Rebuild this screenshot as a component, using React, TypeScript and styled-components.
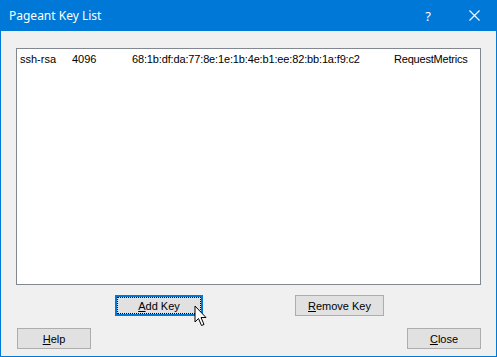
import styled, { createGlobalStyle } from "styled-components";

const Global = createGlobalStyle`
  html, body {
    margin: 0;
    padding: 0;
    width: 497px;
    height: 357px;
    overflow: hidden;
    background: #f0f0f0;
  }
`;

type BtnProps = {
  $focused?: boolean;
  $width: string;
};

const Window = styled.div`
  position: relative;
  width: 497px;
  height: 357px;
  box-sizing: border-box;
  border: 1px solid #0078d7;
  border-top: none;
  background: #f0f0f0;
  display: flex;
  flex-direction: column;
  font-family: "Liberation Sans", Arial, sans-serif;
  font-size: 11px;
  color: #000;
`;

const TitleBar = styled.div`
  height: 31px;
  margin: 0 -1px;
  background: #0078d7;
  color: #fff;
  display: flex;
  align-items: center;
  font-family: "Noto Sans", "Open Sans", sans-serif;
  font-size: 12px;
  padding-left: 9px;
  .title {
    flex: 1;
    margin-top: -1px;
  }
`;

const TitleButton = styled.div`
  width: 46px;
  height: 31px;
  display: flex;
  align-items: center;
  justify-content: center;
  font-family: "Noto Sans", sans-serif;
  font-size: 13px;
  color: #fff;
`;

const Content = styled.div`
  flex: 1;
  display: flex;
  flex-direction: column;
  padding: 17px 15px 0 15px;
`;

const KeyList = styled.div`
  height: 237px;
  box-sizing: border-box;
  border: 1px solid #828790;
  background: #fff;
  padding: 3px 2px;
`;

const KeyRow = styled.div`
  display: flex;
  height: 14px;
  line-height: 14px;
  white-space: nowrap;
  span {
    display: inline-block;
  }
  .type {
    width: 52px;
    padding-left: 1px;
  }
  .bits {
    width: 60px;
  }
  .fp {
    width: 262px;
    letter-spacing: -0.15px;
  }
  .comment {
    letter-spacing: -0.2px;
  }
`;

const ActionRow = styled.div`
  display: flex;
  margin-top: 10px;
  padding-left: 99px;
  gap: 92px;
`;

const FooterRow = styled.div`
  display: flex;
  justify-content: space-between;
  margin-top: 12px;
  padding: 0 0 0 1px;
`;

const Button = styled.div<BtnProps>`
  position: relative;
  width: ${({ $width }) => $width};
  height: 21px;
  box-sizing: border-box;
  background: #e1e1e1;
  border: ${({ $focused }) => ($focused ? "2px solid #0078d7" : "1px solid #adadad")};
  display: flex;
  align-items: center;
  justify-content: center;
  font-size: 11px;
  u {
    text-decoration: underline;
    text-underline-offset: 1px;
  }
  ${({ $focused }) =>
    $focused &&
    `
    &::after {
      content: "";
      position: absolute;
      inset: 0;
      border: 1px dotted #000;
    }
  `}
`;

const Cursor = styled.svg`
  position: absolute;
  left: 193px;
  top: 305px;
`;

export default function App() {
  return (
    <Window>
      <Global />
      <TitleBar>
        <span className="title">Pageant Key List</span>
        <TitleButton>?</TitleButton>
        <TitleButton>
          <svg width="11" height="11" viewBox="0 0 11 11">
            <path d="M0.5 0.5 L10.5 10.5 M10.5 0.5 L0.5 10.5" stroke="#fff" strokeWidth="1.1" />
          </svg>
        </TitleButton>
      </TitleBar>
      <Content>
        <KeyList>
          <KeyRow>
            <span className="type">ssh-rsa</span>
            <span className="bits">4096</span>
            <span className="fp">68:1b:df:da:77:8e:1e:1b:4e:b1:ee:82:bb:1a:f9:c2</span>
            <span className="comment">RequestMetrics</span>
          </KeyRow>
        </KeyList>
        <ActionRow>
          <Button $width="88px" $focused>
            <span>
              <u>A</u>dd Key
            </span>
          </Button>
          <Button $width="89px">
            <span>
              <u>R</u>emove Key
            </span>
          </Button>
        </ActionRow>
        <FooterRow>
          <Button $width="74px">
            <span>
              <u>H</u>elp
            </span>
          </Button>
          <Button $width="74px">
            <span>
              <u>C</u>lose
            </span>
          </Button>
        </FooterRow>
      </Content>
      <Cursor width="14" height="22" viewBox="0 0 14 22">
        <path
          d="M1 1 L1 17 L4.5 13.5 L7.5 20.5 L10 19.5 L7 12.5 L12 12.5 Z"
          fill="#fff"
          stroke="#000"
          strokeWidth="1"
          strokeLinejoin="miter"
        />
      </Cursor>
    </Window>
  );
}
